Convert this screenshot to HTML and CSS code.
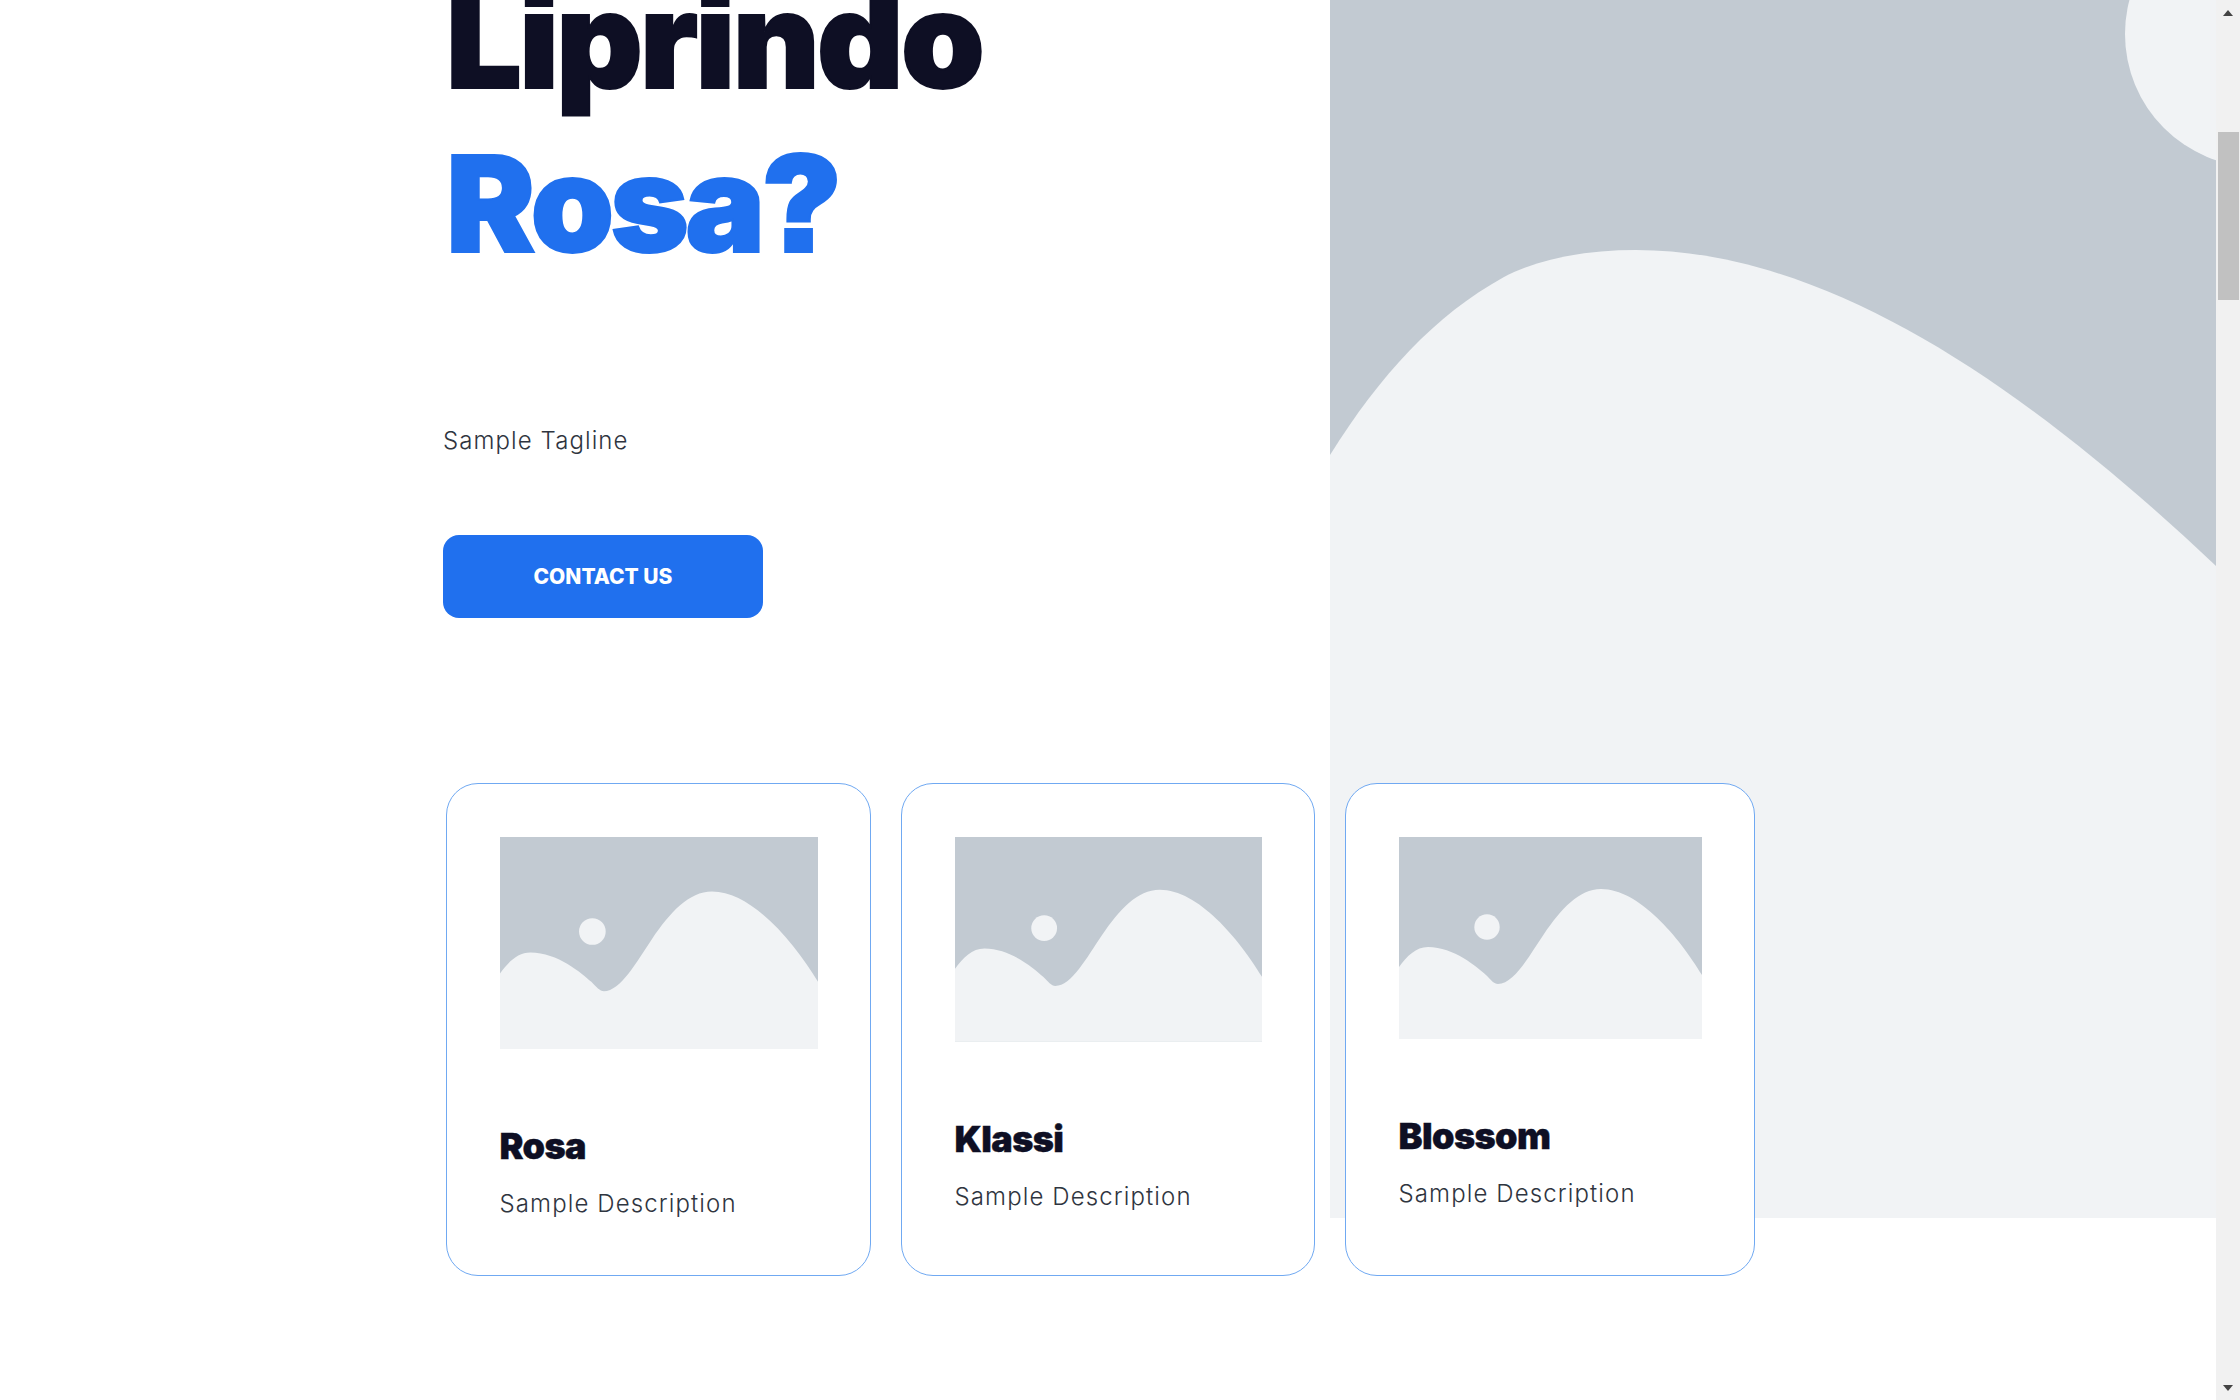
FILE: index.html
```html
<!DOCTYPE html>
<html lang="en">
<head>
<meta charset="utf-8">
<title>Liprindo Rosa</title>
<link rel="stylesheet" href="styles.css">
</head>
<body>
<div class="viewport">
  <main class="page">
    <section class="hero">
      <div class="hero-copy">
        <h1 class="hero-title">Liprindo<br><span class="accent">Rosa?</span></h1>
        <p class="tagline">Sample Tagline</p>
        <a class="cta" href="#">CONTACT US</a>
      </div>
      <div class="hero-art">
        <svg class="hero-svg" viewBox="0 0 886 1218" preserveAspectRatio="none" aria-hidden="true">
          <rect class="art-bg" width="886" height="1218"/>
          <circle class="art-fg" cx="928" cy="34" r="133"/>
          <path class="art-fg" d="M0 455 C50 375 105 315 174 277 C210 258 258 250 306 250 C500 250 700 390 886 566 V1218 H0 Z"/>
        </svg>
      </div>
    </section>
    <section class="cards">
      <article class="card">
        <svg class="thumb" viewBox="0 0 303 202" aria-hidden="true"><rect class="art-bg" width="303" height="202"/><circle class="art-fg" cx="88" cy="90" r="12.7"/><path class="art-fg" d="M0 130 C8 119 17 110 29 110 C55 110 78 130 87 138 C92 143 95 147 99 147 C115 147 130 119 145 97 C162 72 180 52 202 52 C240 52 280 100 303 138 V202 H0 Z"/></svg>
        <h2 class="card-title">Rosa</h2>
        <p class="card-desc">Sample Description</p>
      </article>
      <article class="card">
        <svg class="thumb" viewBox="0 0 303 202" aria-hidden="true"><rect class="art-bg" width="303" height="202"/><circle class="art-fg" cx="88" cy="90" r="12.7"/><path class="art-fg" d="M0 130 C8 119 17 110 29 110 C55 110 78 130 87 138 C92 143 95 147 99 147 C115 147 130 119 145 97 C162 72 180 52 202 52 C240 52 280 100 303 138 V202 H0 Z"/></svg>
        <h2 class="card-title">Klassi</h2>
        <p class="card-desc">Sample Description</p>
      </article>
      <article class="card">
        <svg class="thumb" viewBox="0 0 303 202" aria-hidden="true"><rect class="art-bg" width="303" height="202"/><circle class="art-fg" cx="88" cy="90" r="12.7"/><path class="art-fg" d="M0 130 C8 119 17 110 29 110 C55 110 78 130 87 138 C92 143 95 147 99 147 C115 147 130 119 145 97 C162 72 180 52 202 52 C240 52 280 100 303 138 V202 H0 Z"/></svg>
        <h2 class="card-title">Blossom</h2>
        <p class="card-desc">Sample Description</p>
      </article>
    </section>
  </main>
  <aside class="scrollbar" aria-hidden="true">
    <span class="arrow arrow-up"></span>
    <span class="thumb-bar"></span>
    <span class="arrow arrow-down"></span>
  </aside>
</div>
</body>
</html>
```

FILE: styles.css
```css
* { box-sizing: border-box; }
html, body { margin: 0; padding: 0; height: 100%; overflow: hidden; background: #fff; }
body { font-family: "Inter", "Liberation Sans", sans-serif; color: #0e0f24; font-optical-sizing: none; }

.viewport { display: flex; height: 1400px; overflow: hidden; }
.page { width: 2216px; flex: none; }

.hero { display: flex; height: 1218px; }
.hero-copy { width: 1330px; flex: none; padding-left: 443px; }
.hero-art { flex: 1; min-width: 0; }
.hero-svg { display: block; width: 100%; height: 100%; }
.art-bg { fill: #c2cad2; }
.art-fg { fill: #f1f3f5; }

.hero-title { margin: -43px 0 0; padding-left: 3px; font-size: 134px; line-height: 164px; font-weight: 900; letter-spacing: -2.6px; -webkit-text-stroke: 2px currentColor; color: #0e0f24; font-feature-settings: "ss07"; }
.accent { color: #2070ee; letter-spacing: -3.8px; }
.tagline { margin: 138px 0 0; font-size: 24px; line-height: 36px; font-weight: 300; letter-spacing: 1.08px; color: #2f3540; }
.cta { display: flex; align-items: center; justify-content: center; width: 320px; height: 83px; margin-top: 76px; border-radius: 16px; background: #2070ee; color: #fff; font-size: 21px; font-weight: 800; text-decoration: none; }

.cards { position: relative; display: grid; grid-template-columns: 425px 414px 410px; column-gap: 30px; margin: -435px 0 0 446px; width: max-content; }
.card { height: 493px; padding: 53px 52.5px; border: 1px solid #70a9f2; border-radius: 32px; background: #fff; }
.thumb { display: block; width: 100%; height: auto; }
.card-title { margin: 76px 0 0; font-size: 36px; line-height: 43px; font-weight: 900; letter-spacing: -0.6px; -webkit-text-stroke: 0.4px currentColor; color: #0e0f24; }
.card-desc { margin: 18px 0 0; font-size: 24px; line-height: 36px; font-weight: 300; letter-spacing: 1.12px; color: #2f3540; }

.scrollbar { position: relative; width: 24px; flex: none; background: #f1f1f1; }
.thumb-bar { position: absolute; left: 2px; right: 1px; top: 132px; height: 168px; background: #c1c1c1; }
.arrow { position: absolute; left: 7px; width: 0; height: 0; border-left: 5.5px solid transparent; border-right: 5.5px solid transparent; }
.arrow-up { top: 10px; border-bottom: 6px solid #444; }
.arrow-down { bottom: 9px; border-top: 6px solid #444; }
```
